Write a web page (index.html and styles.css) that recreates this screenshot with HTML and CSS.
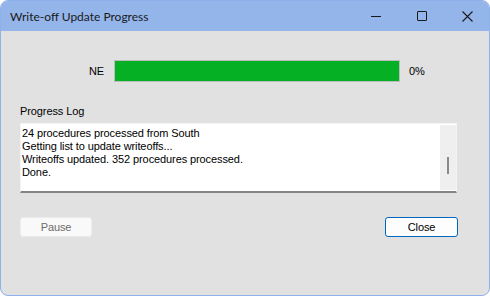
FILE: index.html
```html
<!DOCTYPE html>
<html>
<head>
<meta charset="utf-8">
<link rel="stylesheet" href="styles.css">
</head>
<body>
<div class="window">
  <div class="titlebar">
    <div class="title">Write-off Update Progress</div>
    <div class="controls">
      <div class="ctl"><svg width="10" height="10" viewBox="0 0 10 10"><path d="M0 5.5H10" stroke="#1a1a1a" stroke-width="1"/></svg></div>
      <div class="ctl"><svg width="10" height="10" viewBox="0 0 10 10"><rect x="0.5" y="0.5" width="9" height="9" fill="none" stroke="#1a1a1a" stroke-width="1" rx="0.5"/></svg></div>
      <div class="ctl"><svg width="11" height="11" viewBox="0 0 11 11"><path d="M0.5 0.5L10.5 10.5M10.5 0.5L0.5 10.5" stroke="#1a1a1a" stroke-width="1.1"/></svg></div>
    </div>
  </div>
  <div class="content">
    <div class="progress-row">
      <div class="region">NE</div>
      <div class="bar"><div class="fill" style="width:100%"></div></div>
      <div class="pct">0%</div>
    </div>
    <div class="log-label">Progress Log</div>
    <div class="log">
      <div class="log-text">24 procedures processed from South<br>Getting list to update writeoffs...<br>Writeoffs updated. 352 procedures processed.<br>Done.</div>
      <div class="scroll"><div class="thumb"></div></div>
    </div>
    <div class="buttons">
      <div class="btn pause">Pause</div>
      <div class="btn close">Close</div>
    </div>
  </div>
</div>
</body>
</html>
```
FILE: styles.css
```css
html, body {
  margin: 0;
  padding: 0;
  background: #ffffff;
}
body {
  font-family: "Liberation Sans", Arial, sans-serif;
  font-size: 11px;
  line-height: 13px;
  letter-spacing: -0.1px;
  color: #000;
}
.window {
  width: 490px;
  height: 296px;
  box-sizing: border-box;
  border: 1px solid #8db1ea;
  border-radius: 8px;
  overflow: hidden;
  background: #e1e1e1;
  display: flex;
  flex-direction: column;
}
.titlebar {
  height: 30px;
  background: #94b5ea;
  display: flex;
  align-items: center;
  flex-shrink: 0;
}
.title {
  padding-left: 9px;
  flex: 1;
  color: #1a1a1a;
  font-family: Lato, "Noto Sans", sans-serif;
  font-size: 12px;
  letter-spacing: 0;
  line-height: 16px;
  padding-top: 1px;
}
.controls {
  display: flex;
  height: 30px;
}
.ctl {
  width: 46px;
  display: flex;
  align-items: center;
  justify-content: center;
}
.ctl:last-child {
  width: 44px;
}
.content {
  padding: 29px 31px 0 19px;
  display: flex;
  flex-direction: column;
}
.progress-row {
  display: flex;
  align-items: center;
  height: 22px;
}
.region {
  width: 84px;
  text-align: right;
  color: #000;
}
.bar {
  margin-left: 10px;
  width: 284px;
  height: 20px;
  border: 1px solid #bcbcbc;
  background: #e6e6e6;
}
.fill {
  height: 100%;
  background: #06b025;
}
.pct {
  margin-left: 9px;
  color: #000;
}
.log-label {
  margin-top: 23px;
  color: #000;
}
.log {
  margin-top: 5px;
  width: 437px;
  height: 70px;
  box-sizing: border-box;
  background: #fff;
  border-top: 1px solid #f4f4f4;
  border-left: 1px solid #f4f4f4;
  border-right: 1px solid #f4f4f4;
  border-bottom: 2px solid #848484;
  display: flex;
}
.log-text {
  flex: 1;
  padding: 3px 0 0 1px;
  white-space: nowrap;
}
.scroll {
  width: 16px;
  background: #efefef;
  margin: 1px 0;
  display: flex;
  align-items: flex-start;
  justify-content: center;
}
.thumb {
  margin-top: 32px;
  width: 2px;
  height: 17px;
  background: #8a8a8a;
}
.buttons {
  margin-top: 24px;
  display: flex;
  justify-content: space-between;
}
.btn {
  height: 20px;
  box-sizing: border-box;
  border-radius: 3px;
  display: flex;
  align-items: center;
  justify-content: center;
}
.pause {
  width: 72px;
  background: #f9f9f9;
  border: 1px solid #ececec;
  color: #6d6d6d;
}
.close {
  width: 73px;
  background: #fdfdfd;
  border: 1px solid #0067c0;
  color: #000;
}
```
